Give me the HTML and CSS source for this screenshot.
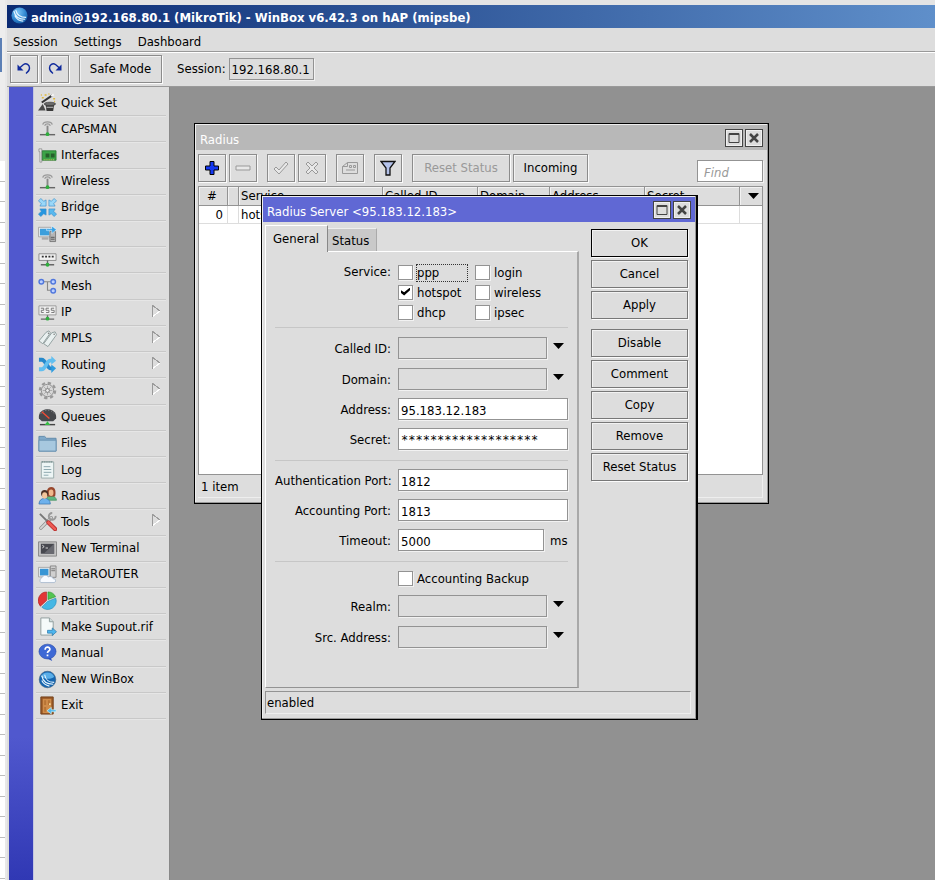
FILE: index.html
```html
<!DOCTYPE html>
<html lang="en">
<head>
<meta charset="utf-8">
<title>WinBox</title>
<link rel="stylesheet" href="styles.css">
</head>
<body>
<div class="page">
<div class="backdrop"><span class="backdrop-tab"></span></div>
<div class="app">
  <header class="titlebar">
    <svg class="logo" viewBox="0 0 18 18" aria-hidden="true"><defs><radialGradient id="ball" cx=".4" cy=".3" r=".8"><stop offset="0" stop-color="#7cc4f4"/><stop offset=".6" stop-color="#2f86cf"/><stop offset="1" stop-color="#0f4f96"/></radialGradient></defs><circle cx="9" cy="9" r="8.5" fill="url(#ball)"/><path d="M3 4c1 5 4 9 12 9M5 3c1 5 4 8 11 8M4 9c2 4 5 6 9 6" fill="none" stroke="#e8f6ff" stroke-width="1.2"/></svg>
    <h1>admin@192.168.80.1 (MikroTik) - WinBox v6.42.3 on hAP (mipsbe)</h1>
  </header>
  <nav class="menubar"><a href="#">Session</a><a href="#">Settings</a><a href="#">Dashboard</a></nav>
  <div class="toolbar">
    <button class="btn square" aria-label="Undo"><svg viewBox="0 0 16 16"><path d="M3.500 7L7.500 3.500c3-2 6 .5 6 3.500 0 2.500-1.500 4-3.500 5.500" fill="none" stroke="#102a9c" stroke-width="1.400"/><path d="M1.500 3.500v6h6z" fill="#102a9c"/></svg></button>
    <button class="btn square" aria-label="Redo"><svg viewBox="0 0 16 16"><path d="M12.500 7L8.500 3.500c-3-2-6 .5-6 3.500 0 2.500 1.500 4 3.500 5.500" fill="none" stroke="#102a9c" stroke-width="1.400"/><path d="M14.500 3.500v6h-6z" fill="#102a9c"/></svg></button>
    <button class="btn safe">Safe Mode</button>
    <label for="session">Session:</label>
    <input id="session" class="field session" value="192.168.80.1" readonly>
  </div>
  <div class="main">
    <div class="stripe"></div>
    <nav class="side">
      <ul>
        <li><a href="#"><svg viewBox="0 0 20 20"><path d="M4 10L15 2.500" stroke="#333" stroke-width="2.200"/><path d="M14 3.200l2.500-1.700" stroke="#f5f5f5" stroke-width="2.200"/><path d="M8 12h9l-1 7H9z" fill="#3a3a3a"/><ellipse cx="12.500" cy="11.500" rx="6" ry="1.800" fill="#6a6a6a" stroke="#333" stroke-width=".7"/><path d="M9 15h7" stroke="#ccc"/><path d="M0 18.500l5-7 3 7z" fill="#4a4a4a"/><path d="M7 2h2M4 5h2M11 1h1M16 6h2M17 9h1M3 2h1" stroke="#e0b838" stroke-width="1.600"/></svg>Quick Set</a></li>
        <li><a href="#"><svg viewBox="0 0 20 20"><path d="M5 6c1-4 9-4 10 0M7 7c1-2.500 5-2.500 6 0" fill="none" stroke="#999" stroke-width="1.300"/><path d="M10 7v9" stroke="#888" stroke-width="2"/><path d="M2 16.500h16" stroke="#666" stroke-width="1.500"/><circle cx="10" cy="16" r="2" fill="#2fae3d"/></svg>CAPsMAN</a></li>
        <li><a href="#"><svg viewBox="0 0 20 20"><path d="M1 3h3v14H2V6H1z" fill="#e8e8e8" stroke="#8a8a8a" stroke-width=".8"/><path d="M4.500 5H19v10H4.500z" fill="#3ca447" stroke="#23732d" stroke-width=".8"/><path d="M8 8h4v4H8zM13.500 8h4v4h-4z" fill="#265f2b"/><path d="M6 14.500h11" stroke="#d8cf62" stroke-dasharray="1 1"/></svg>Interfaces</a></li>
        <li><a href="#"><svg viewBox="0 0 20 20"><path d="M5 6c1-4 9-4 10 0M7 7c1-2.500 5-2.500 6 0" fill="none" stroke="#999" stroke-width="1.300"/><path d="M10 7v9" stroke="#888" stroke-width="2"/><path d="M2 16.500h16" stroke="#666" stroke-width="1.500"/><circle cx="10" cy="16" r="2" fill="#2fae3d"/></svg>Wireless</a></li>
        <li><a href="#"><svg viewBox="0 0 20 20"><g stroke="#3990cc" stroke-width=".7"><path d="M.5 3l2.500-2.500 3 3L8.500 2v6.500H2L3.500 6z" fill="#9ad7f8"/><path d="M19.500 3L17 .5l-3 3L11.500 2v6.500H18L16.500 6z" fill="#9ad7f8"/><path d="M.5 17L3 19.500l3-3 2.500 1.500v-6.500H2L3.500 14z" fill="#2596e0"/><path d="M19.500 17L17 19.500l-3-3-2.500 1.500v-6.500H18L16.500 14z" fill="#58b8ee"/></g></svg>Bridge</a></li>
        <li><a href="#"><svg viewBox="0 0 20 20"><path d="M.5 3.500h13v10H.5z" fill="#eee" stroke="#999" stroke-width=".8"/><path d="M2 5h10v7H2z" fill="#3c9fdc"/><path d="M4 14h7v2.500H4z" fill="#aaa"/><path d="M12.500 8h6v10.500h-6z" fill="#b5b5b5" stroke="#666" stroke-width=".8"/><path d="M13.500 14h4M13.500 16h4" stroke="#555"/><path d="M9 5h5.500V2L19.500 6l-5 4V7H9z" fill="#36a2e6" stroke="#fff" stroke-width=".5"/></svg>PPP</a></li>
        <li><a href="#"><svg viewBox="0 0 20 20"><path d="M1 4h18v7H1z" fill="#f1f1f1" stroke="#8c8c8c"/><path d="M4 7h2M7.500 7h2M11 7h2M14.500 7h2" stroke="#333" stroke-width="2"/><path d="M10 11v5M3 15.500h14" stroke="#666" stroke-width="1.500"/><circle cx="10" cy="15.500" r="2" fill="#2fae3d"/></svg>Switch</a></li>
        <li><a href="#"><svg viewBox="0 0 20 20"><path d="M6 5h9M10 5v9h5" fill="none" stroke="#888" stroke-width="1.200"/><g fill="#bcd0ff" stroke="#5077dd" stroke-width="1.500"><circle cx="3.500" cy="5" r="2.400"/><circle cx="16" cy="5" r="2.400"/><circle cx="16" cy="14.500" r="2.400"/></g></svg>Mesh</a></li>
        <li class="sub"><a href="#"><svg viewBox="0 0 20 20"><path d="M1 3h18v9.500H1z" fill="#f1f1f1" stroke="#999"/><path d="M3 5.500h3v2.200H3.500V10H6M8.500 10h3V7.700h-3V5.500h3M14 10h3V7.700h-3V5.500h3" fill="none" stroke="#777"/><path d="M10 13v4M3 17h14" stroke="#666" stroke-width="1.500"/><circle cx="10" cy="16.500" r="2" fill="#2fae3d"/></svg>IP</a></li>
        <li class="sub"><a href="#"><svg viewBox="0 0 20 20"><g fill="#e9f0f0" stroke="#879797" stroke-width=".9"><path d="M8.500 3.500l3-1.500 1.500 2L5 15.500l-4-3z"/><path d="M14.500 4l3.500-1 1.500 3-9 12.500-4.500-3z"/></g><circle cx="11" cy="4.500" r=".7" fill="#777"/><circle cx="17" cy="5.500" r=".8" fill="#777"/></svg>MPLS</a></li>
        <li class="sub"><a href="#"><svg viewBox="0 0 20 20"><path d="M1 5h3c4 0 6 9 9 9h2" fill="none" stroke="#2689cb" stroke-width="4"/><path d="M1 15h3c4 0 5-9 9-9h2" fill="none" stroke="#62bff0" stroke-width="4"/><path d="M14 1l5 5-5 4z" fill="#62bff0"/><path d="M14 10l5 4-5 5z" fill="#2d9ce0"/></svg>Routing</a></li>
        <li class="sub"><a href="#"><svg viewBox="0 0 20 20"><circle cx="10" cy="10" r="8" fill="none" stroke="#999" stroke-width="2.400" stroke-dasharray="3.500 2.780"/><circle cx="10" cy="10" r="6.500" fill="#d8d8d8" stroke="#8f8f8f"/><path d="M10 5v10M5 10h10M6.500 6.500l7 7M13.500 6.500l-7 7" stroke="#aaa"/><circle cx="10" cy="10" r="2" fill="#eee" stroke="#777"/></svg>System</a></li>
        <li><a href="#"><svg viewBox="0 0 20 20"><path d="M1 11C-1-2 21-2 19 11l-3 3H4z" fill="#46484c"/><path d="M3 6c3-5 11-5 14 0" fill="none" stroke="#999" stroke-dasharray="1 2"/><path d="M4 4l8 7" stroke="#ef4b35" stroke-width="1.500"/><path d="M2 17.500h16" stroke="#444" stroke-width="1.500"/><path d="M10 14l3 4H7z" fill="#35bc42"/></svg>Queues</a></li>
        <li><a href="#"><svg viewBox="0 0 20 20"><path d="M1 2.500h6l2 2h10V18H1z" fill="#7fa9c9" stroke="#6089aa"/><path d="M1 6.500h18V18H1z" fill="#a7c8df" stroke="#6c94b2"/></svg>Files</a></li>
        <li><a href="#"><svg viewBox="0 0 20 20"><path d="M3.500 2h13v17h-13z" fill="#edf5f5" stroke="#9aabab"/><path d="M4 2h12" stroke="#708888" stroke-width="2" stroke-dasharray="1 1"/><path d="M6 7h7M6 10h8M6 13h8M6 16h5" stroke="#8aa5ad"/></svg>Log</a></li>
        <li><a href="#"><svg viewBox="0 0 20 20"><path d="M8 15c0-6 11-6 11.500 0z" fill="#5fb67f" stroke="#3b8d5a" stroke-width=".7"/><path d="M9.500 11c-1-5 0-10 4.500-10s5 5 4 10z" fill="#98472d"/><ellipse cx="13.800" cy="7" rx="2.500" ry="3.400" fill="#f0b98c"/><path d="M1 19c0-8 12-8 12 0z" fill="#6eb1ec" stroke="#356fa8" stroke-width=".7"/><circle cx="7" cy="8" r="3.800" fill="#4c3024"/><ellipse cx="7" cy="10" rx="2.700" ry="3.500" fill="#f3c59b"/></svg>Radius</a></li>
        <li class="sub"><a href="#"><svg viewBox="0 0 20 20"><path d="M3 17L14 6" stroke="#8c8c8c" stroke-width="3.500" stroke-linecap="round"/><path d="M3 17L14 6" stroke="#d5d5d5" stroke-width="2" stroke-linecap="round"/><path d="M18.500 4a3.600 3.600 0 1 1-3.500-3" fill="none" stroke="#999" stroke-width="2"/><path d="M2 2l9 9" stroke="#777" stroke-width="2"/><path d="M11 11l7 7" stroke="#b52a2a" stroke-width="4.500" stroke-linecap="round"/><path d="M11 11l7 7" stroke="#ee5a53" stroke-width="2.800" stroke-linecap="round"/></svg>Tools</a></li>
        <li><a href="#"><svg viewBox="0 0 20 20"><path d="M.5 3h19v15H.5z" fill="#c4c4c4" stroke="#888"/><path d="M3 5h14v10.500H3z" fill="#47484f"/><path d="M17 5v10.500H6z" fill="#686970"/><path d="M4.500 6.500l2 1.500-2 1.500M8 9.500h2.500" fill="none" stroke="#ddd"/></svg>New Terminal</a></li>
        <li><a href="#"><svg viewBox="0 0 20 20"><path d="M.5 2.500h12v10H.5z" fill="#eee" stroke="#999" stroke-width=".8"/><path d="M2 4h9v7H2z" fill="#3795d5"/><path d="M13 1h6v12h-6z" fill="#d0d0d0" stroke="#777" stroke-width=".8"/><path d="M14 4h4M14 6h4" stroke="#777"/><path d="M3 18.500a3 3 0 0 1 1-5 4 4 0 0 1 7-1 3.500 3.500 0 0 1 5 2 2 2 0 0 1 1 4z" fill="#f7faff" stroke="#9fb2c9" stroke-width=".8"/></svg>MetaROUTER</a></li>
        <li><a href="#"><svg viewBox="0 0 20 20"><path d="M9 10V1a9 9 0 0 0-6.500 15z" fill="#e33636" stroke="#a81d1d" stroke-width=".6"/><path d="M10.500 9V1a9 9 0 0 1 8 5z" fill="#52c452" stroke="#278e2b" stroke-width=".6"/><path d="M10 11l8.700-3.500A9 9 0 0 1 4 17z" fill="#45b7e4" stroke="#2185b5" stroke-width=".6"/></svg>Partition</a></li>
        <li><a href="#"><svg viewBox="0 0 20 20"><path d="M3 1h9l4 4v14H3z" fill="#f5fafa" stroke="#8f9d9d"/><path d="M12 1v4h4" fill="#cfdcdc" stroke="#8f9d9d"/><path d="M10 14h5v-2.500l4.500 4-4.500 4V17h-5z" fill="#4eb6ee" stroke="#2373a8" stroke-width=".7"/></svg>Make Supout.rif</a></li>
        <li><a href="#"><svg viewBox="0 0 20 20"><path d="M9 16l3-3 3 6z" fill="#2c51c0"/><ellipse cx="10" cy="9" rx="9" ry="7.800" fill="#3e69d5" stroke="#2445a5" stroke-width=".6"/><path d="M7.500 7c0-4 5.500-3 5 0-.3 1.600-2.500 1.500-2.500 3.500M10 12v2" fill="none" stroke="#fff" stroke-width="1.800"/></svg>Manual</a></li>
        <li><a href="#"><svg viewBox="0 0 20 20"><circle cx="10" cy="10" r="8.700" fill="#1565b0" stroke="#3b5f82" stroke-width=".7"/><path d="M3 7c2-6 12-6 14 0-3 3-9 3-14 0z" fill="#5aaee8"/><path d="M4 6c1 6 4 9 12 9M7 5c1 5 3 8 10 8M4 11c2 4 4 5 8 6" fill="none" stroke="#e8f6ff" stroke-width="1.200"/></svg>New WinBox</a></li>
        <li><a href="#"><svg viewBox="0 0 20 20"><path d="M3 1h13v18H3z" fill="#9a5a27" stroke="#74401a"/><path d="M5 3h9v15H5z" fill="#cf8c4a"/><path d="M6.500 4.500h2v5h-2zM10.500 4.500h2v5h-2zM6.500 11.500h2v5h-2z" fill="#b77335"/><circle cx="12.500" cy="8.500" r="1" fill="#ffe9a8"/><path d="M19 14.500h-5V12l-4.500 3.500L14 19v-2.500h5z" fill="#4eb6ee" stroke="#dff" stroke-width=".6"/></svg>Exit</a></li>
      </ul>
    </nav>
    <main class="desktop">
      <section class="win radius">
        <header class="win-title"><h2>Radius</h2>
          <button class="cap" aria-label="Maximize"><svg viewBox="0 0 14 14"><path d="M2 2.500h10v9H2zM2 3.500h10" fill="none" stroke="#444"/></svg></button><button class="cap" aria-label="Close"><svg viewBox="0 0 14 14"><path d="M3 3l8 8M11 3l-8 8" stroke="#444" stroke-width="2.500"/></svg></button>
        </header>
        <div class="tools">
          <button class="btn square" aria-label="Add"><svg viewBox="0 0 16 16"><path d="M6 1.500h4V6h4.500v4H10v4.500H6V10H1.500V6H6z" fill="#1438f0" stroke="#000"/></svg></button>
          <button class="btn square" aria-label="Remove" disabled><svg viewBox="0 0 16 16"><path d="M1 6h14v4H1z" fill="#e8e8e8" stroke="#999"/></svg></button>
          <button class="btn square gap" aria-label="Enable" disabled><svg viewBox="0 0 16 16"><path d="M1 9l2-2 3 3 7-8 2 2-9 10z" fill="#e8e8e8" stroke="#999"/></svg></button>
          <button class="btn square" aria-label="Disable" disabled><svg viewBox="0 0 16 16"><path d="M2 4l2-2 4 4 4-4 2 2-4 4 4 4-2 2-4-4-4 4-2-2 4-4z" fill="#e8e8e8" stroke="#999"/></svg></button>
          <button class="btn square gap" aria-label="Comment" disabled><svg viewBox="0 0 16 16"><path d="M5.500 2.500h10v11H.500v-7zM5.500 2.500v4h-5M7.500 5.500v2h2v-2zM11.500 5.500v2h2v-2zM4 10h9" fill="none" stroke="#999"/></svg></button>
          <button class="btn square gap" aria-label="Filter"><svg viewBox="0 0 16 16"><path d="M1 1.500h14L10 8v7H6V8z" fill="#b4c2ea" stroke="#111" stroke-width="1.300"/></svg></button>
          <button class="btn wide gap" disabled>Reset Status</button>
          <button class="btn incoming">Incoming</button>
          <input class="field find" placeholder="Find" aria-label="Find">
        </div>
        <div class="list">
          <table>
            <colgroup><col class="c-num"><col class="c-flag"><col class="c-service"><col class="c-called"><col class="c-domain"><col class="c-address"><col><col class="c-drop"></colgroup>
            <thead><tr><th class="num">#</th><th></th><th>Service</th><th>Called ID</th><th>Domain</th><th>Address</th><th>Secret</th><th class="drop"><svg class="arrow" viewBox="0 0 11 6" aria-hidden="true"><path d="M0 0h11L5.500 6z"/></svg></th></tr></thead>
            <tbody><tr><td class="num">0</td><td></td><td>hotspot</td><td></td><td></td><td></td><td></td><td></td></tr></tbody>
          </table>
        </div>
        <footer class="status">1 item</footer>
      </section>

      <section class="win server">
        <header class="win-title"><h2>Radius Server &lt;95.183.12.183&gt;</h2>
          <button class="cap" aria-label="Maximize"><svg viewBox="0 0 14 14"><path d="M2 2.500h10v9H2zM2 3.500h10" fill="none" stroke="#444"/></svg></button><button class="cap" aria-label="Close"><svg viewBox="0 0 14 14"><path d="M3 3l8 8M11 3l-8 8" stroke="#444" stroke-width="2.500"/></svg></button>
        </header>
        <div class="body">
          <div class="left">
            <div class="tabs"><button class="tab on">General</button><button class="tab">Status</button></div>
            <form class="panel">
              <div class="row top"><span class="label">Service:</span>
                <div class="checks">
                  <label><input type="checkbox"><span class="focus">ppp</span></label><label><input type="checkbox"><span>login</span></label>
                  <label><input type="checkbox" checked><span>hotspot</span></label><label><input type="checkbox"><span>wireless</span></label>
                  <label><input type="checkbox"><span>dhcp</span></label><label><input type="checkbox"><span>ipsec</span></label>
                </div>
              </div>
              <hr>
              <div class="row pick"><label class="label" for="called">Called ID:</label><select id="called" class="field"><option></option></select><svg class="arrow" viewBox="0 0 11 6" aria-hidden="true"><path d="M0 0h11L5.500 6z"/></svg></div>
              <div class="row pick"><label class="label" for="domain">Domain:</label><select id="domain" class="field"><option></option></select><svg class="arrow" viewBox="0 0 11 6" aria-hidden="true"><path d="M0 0h11L5.500 6z"/></svg></div>
              <div class="row"><label class="label" for="address">Address:</label><input id="address" class="field" value="95.183.12.183"></div>
              <div class="row"><label class="label" for="secret">Secret:</label><input id="secret" class="field secret" value="*******************"></div>
              <hr>
              <div class="row"><label class="label" for="auth">Authentication Port:</label><input id="auth" class="field" value="1812"></div>
              <div class="row"><label class="label" for="acct">Accounting Port:</label><input id="acct" class="field" value="1813"></div>
              <div class="row"><label class="label" for="timeout">Timeout:</label><input id="timeout" class="field" value="5000"><span class="unit">ms</span></div>
              <hr>
              <div class="row backup"><span class="label"></span><label class="check"><input type="checkbox"><span>Accounting Backup</span></label></div>
              <div class="row pick"><label class="label" for="realm">Realm:</label><select id="realm" class="field"><option></option></select><svg class="arrow" viewBox="0 0 11 6" aria-hidden="true"><path d="M0 0h11L5.500 6z"/></svg></div>
              <div class="row pick"><label class="label" for="src">Src. Address:</label><select id="src" class="field"><option></option></select><svg class="arrow" viewBox="0 0 11 6" aria-hidden="true"><path d="M0 0h11L5.500 6z"/></svg></div>
            </form>
          </div>
          <div class="actions">
            <button class="btn default">OK</button><button class="btn">Cancel</button><button class="btn">Apply</button>
            <button class="btn apart">Disable</button><button class="btn">Comment</button><button class="btn">Copy</button><button class="btn">Remove</button><button class="btn">Reset Status</button>
          </div>
        </div>
        <footer class="status">enabled</footer>
      </section>
    </main>
  </div>
</div>
</div>
</body>
</html>
```
FILE: styles.css
```css
* { box-sizing: border-box; }

body {
  margin: 0;
  background: #fff;
  color: #000;
  font: 13px/16px "DejaVu Sans Condensed", "DejaVu Sans", sans-serif;
}

button, input, select { font: inherit; color: inherit; }
h1, h2 { margin: 0; font-size: inherit; }
a { color: inherit; text-decoration: none; }
svg { display: block; flex: none; }

.page { display: flex; min-height: 100vh; background: #e8e8e8; }

.backdrop {
  width: 5px;
  margin-right: 2px;
  padding-top: 38px;
  background: repeating-linear-gradient(#fff 0 20px, #bdbdbd 20px 21px, #fff 21px 40px, #bdbdbd 40px 41px) 0 161px no-repeat, #ededed;
}
.backdrop-tab { display: block; width: 2px; height: 34px; background: #5b7fb5; }

.app { flex: 1; min-width: 0; display: flex; flex-direction: column; padding-top: 5px; background: linear-gradient(#e4e4e4 5px, #ddd 5px); }

.titlebar {
  display: flex;
  align-items: center;
  gap: 3px;
  height: 23px;
  padding: 0 4px;
  background: linear-gradient(90deg, #0a2a72, #5f8fca);
  color: #fff;
}
.titlebar h1 { padding-top: 2px; white-space: nowrap; }
.logo { width: 17px; height: 17px; margin-top: -3px; }

.menubar { display: flex; gap: 16px; height: 24px; padding: 6px 6px 0; border-bottom: 1px solid #999; }

.toolbar {
  display: flex;
  align-items: center;
  gap: 3px;
  height: 35px;
  padding: 0 3px 2px;
  border-top: 1px solid #fff;
  border-bottom: 1px solid #999;
}
.toolbar .safe { width: 83px; margin: 0 12px 0 7px; }

.btn {
  display: flex;
  align-items: center;
  justify-content: center;
  height: 28px;
  padding: 0;
  border: 1px solid #8c8c8c;
  background: #ddd;
  box-shadow: inset 1px 1px #f2f2f2, 1px 1px #fbfbfb;
  white-space: nowrap;
}
.btn:disabled { color: #999; }
.square { width: 28px; }
.square svg { width: 16px; height: 16px; }

.field {
  min-width: 0;
  height: 22px;
  margin: 0;
  padding: 2px 2px 0;
  border: 1px solid #939393;
  border-radius: 0;
  background: #fff;
  box-shadow: 1px 1px #f2f2f2;
  outline: 0;
}
.session { width: 85px; background: #ddd; }

.main { flex: 1; display: flex; padding-left: 2px; }
.stripe { width: 25px; border-right: 1px solid #c4c6e0; background: linear-gradient(#5058ce 650px, #3038b4); }

.side { width: 136px; padding: 3px 3px 0 2px; border-right: 1px solid #888; }
.side ul {
  display: grid;
  grid-template-rows: repeat(24, 1fr);
  height: 629px;
  margin: 0;
  padding: 0;
  list-style: none;
}
.side li { display: flex; border-bottom: 1px solid #c8c8c8; box-shadow: 0 1px #e6e6e6; }
.side a { flex: 1; display: flex; align-items: center; gap: 4px; padding-left: 2px; white-space: nowrap; }
.side svg { width: 19px; height: 19px; }
.sub::after {
  content: "";
  width: 8px;
  height: 12px;
  margin: 5px 6px 0 0;
  background:
    linear-gradient(90deg, #999 1px, transparent 1px),
    linear-gradient(to top right, transparent 46%, #999 46% 56%, transparent 56%) 0 0 / 8px 6px no-repeat,
    linear-gradient(to bottom right, transparent 46%, #fff 46% 56%, transparent 56%) 0 6px / 8px 6px no-repeat;
}
.sub::after { background:
    linear-gradient(90deg, #999 1px, transparent 1px),
    linear-gradient(to top right, transparent 44%, #999 45% 55%, transparent 56%) 0 0 / 8px 6px no-repeat,
    linear-gradient(to bottom right, transparent 44%, #fff 45% 55%, transparent 56%) 0 6px / 8px 6px no-repeat; }

.desktop { position: relative; flex: 1; min-width: 0; background: #919191; overflow: hidden; }

.win {
  position: absolute;
  display: flex;
  flex-direction: column;
  padding: 1px;
  border: 1px solid #000;
  background: #ddd;
  box-shadow: inset -1px -1px #999, inset 1px 1px #eee;
}
.radius { left: 24px; top: 36px; width: 575px; height: 381px; }
.server { left: 91px; top: 108px; width: 437px; height: 525px; border-right-width: 2px; }

.win-title { display: flex; align-items: center; gap: 2px; height: 25px; padding: 0 4px; background: #b8b8b8; color: #fff; }
.win-title h2 { flex: 1; padding-top: 5px; font-weight: normal; }
.server .win-title { background: #6068d4; }
.cap { width: 18px; height: 18px; padding: 1px; border: 1px solid #444; background: #ddd; box-shadow: inset 0 0 0 1px #f0f0f0; }
.cap svg { width: 14px; height: 14px; }

.tools { display: flex; gap: 3px; padding: 4px 4px 4px 2px; }
.tools .gap { margin-left: 7px; }
.tools .wide { width: 98px; }
.tools .incoming { width: 75px; }
.tools .find { width: 66px; margin: 6px 0 0 auto; padding-left: 6px; font-style: italic; }
.find::placeholder { color: #999; opacity: 1; }

.list { flex: 1; margin: 0 4px 0 2px; border: 1px solid #939393; background: #fff; }
table { width: 100%; table-layout: fixed; border-collapse: separate; border-spacing: 0; }
th, td { padding: 0 2px; text-align: left; font-weight: normal; white-space: nowrap; overflow: hidden; }
th { height: 19px; border-right: 1px solid #939393; border-bottom: 1px solid #939393; background: #ddd; box-shadow: inset 1px 1px #f2f2f2; }
td { height: 18px; border-right: 1px solid #ddd; border-bottom: 1px solid #ddd; }
.num { padding-right: 4px; text-align: right; }
th.num { text-align: center; }
th:last-child, td:last-child { border-right: 0; }
.c-num { width: 29px; }
.c-flag { width: 11px; }
.c-service { width: 144px; }
.c-called { width: 95px; }
.c-domain { width: 72px; }
.c-address { width: 95px; }
.c-drop { width: 22px; }
.drop { padding-left: 8px; }
.arrow { width: 11px; height: 6px; }

.status { height: 23px; margin: 0 4px 4px 2px; padding: 4px 3px 0; border-right: 1px solid #eee; border-bottom: 1px solid #eee; }
.server .status { margin-top: 3px; padding: 3px 1px 0; border-top: 1px solid #939393; border-left: 1px solid #939393; }

.body { flex: 1; display: flex; gap: 12px; padding: 3px 7px 0 2px; }
.left { flex: 1; min-width: 0; display: flex; flex-direction: column; }
.tabs { display: flex; align-items: flex-end; height: 26px; }
.tab { height: 23px; padding: 2px 7px 0 4px; border: 0; border-top: 1px solid #eee; border-right: 1px solid #aaa; background: #c9c9c9; }
.tab.on { height: 27px; margin-bottom: -1px; padding: 0 8px 0 7px; border-top-color: #fff; border-left: 1px solid #fff; border-right-color: #888; background: #ddd; z-index: 1; }

.panel {
  flex: 1;
  display: flex;
  flex-direction: column;
  gap: 8px;
  padding: 10px 9px 0;
  border: 1px solid;
  border-color: #fff #a8a8a8 #939393 #fff;
  border-right-width: 2px;
}
.row { display: flex; align-items: center; height: 22px; }
.row.pick { height: 23px; }
.label { width: 116px; margin-right: 7px; padding-top: 2px; text-align: right; white-space: nowrap; }
.row .field { flex: 1; }
.row select { appearance: none; background: #ddd; }
.row .secret { font-family: "DejaVu Sans Mono", monospace; font-size: 12px; }
.row .arrow { margin: 0 4px 3px 6px; }
.unit { width: 18px; margin-left: 6px; padding-top: 2px; }
.panel hr { width: auto; height: 1px; margin: 2px 0 0; border: 0; background: #c6c6c6; align-self: stretch; }

.row.top { height: 61px; align-items: flex-start; margin-bottom: -6px; }
.checks { display: grid; grid-template-columns: 77px auto; grid-auto-rows: 20px; }
.checks label, .check { display: flex; align-items: center; gap: 3px; }
.checks span, .check span { padding: 1px 2px 0 1px; }
.checks .focus { width: 52px; height: 18px; margin-top: 1px; outline: 1px dotted #333; outline-offset: -1px; }
.row.backup { height: 16px; }

input[type="checkbox"] { appearance: none; width: 15px; height: 15px; margin: 0; border: 1px solid #939393; background: #fff; box-shadow: 1px 1px #f2f2f2; }
input[type="checkbox"]:checked::after {
  content: "";
  display: block;
  width: 9px;
  height: 8px;
  margin: 2px;
  background: #000;
  clip-path: polygon(0 35%, 35% 60%, 100% 0, 100% 35%, 35% 100%, 0 70%);
}

.actions { flex: none; display: flex; flex-direction: column; gap: 3px; width: 97px; padding-top: 4px; }
.actions .apart { margin-top: 7px; }
.actions .btn { border-color: #777; }
.actions .default { border-color: #000; }
```
